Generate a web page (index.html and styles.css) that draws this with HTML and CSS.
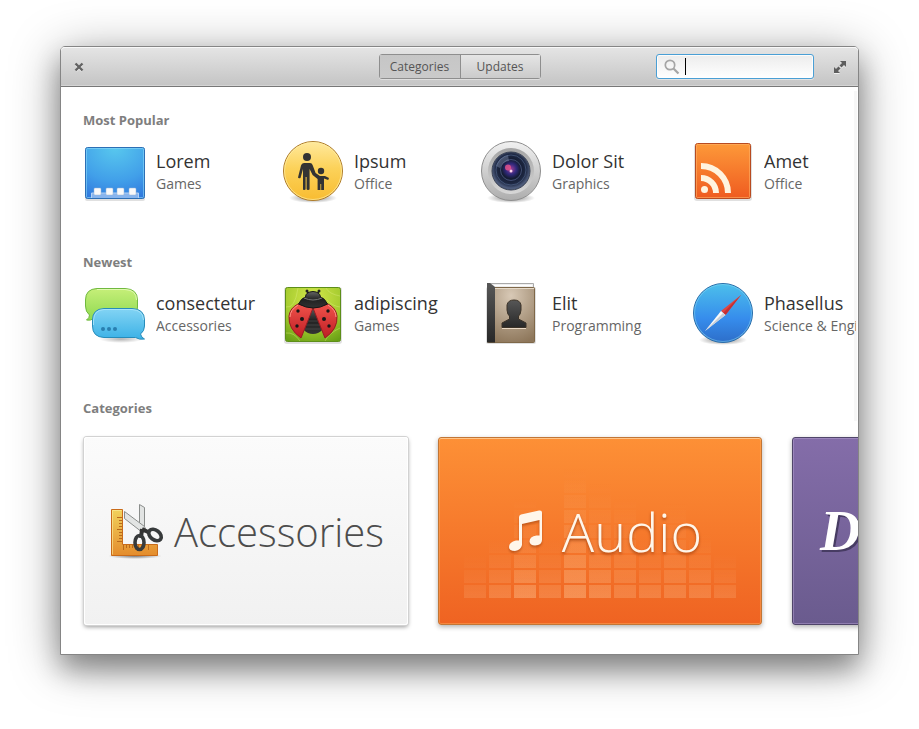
FILE: index.html
```html
<!DOCTYPE html>
<html lang="en">
<head>
<meta charset="utf-8">
<title>Software</title>
<link rel="stylesheet" href="styles.css">
</head>
<body>
<div class="window">
  <header class="bar">
    <button class="icon-btn" aria-label="Close"><svg width="10" height="10" viewBox="0 0 10 10"><path d="M2 3l6 6M8 3l-6 6" stroke="#f2f2f2" stroke-width="2.4"/><path d="M1.5 1.5l7 7M8.500 1.500l-7 7" stroke="#636363" stroke-width="2.400"/></svg></button>
    <nav class="switch"><button class="active">Categories</button><button>Updates</button></nav>
    <div class="bar-end">
      <label class="search">
        <svg width="16" height="16" viewBox="0 0 16 16"><circle cx="6" cy="6" r="4.700" fill="none" stroke="#a5a5a5" stroke-width="1.700"/><path d="M9.500 9.500l5 5" stroke="#a5a5a5" stroke-width="2.200"/></svg>
        <span class="caret"></span>
        <input type="text" aria-label="Search">
      </label>
      <button class="icon-btn" aria-label="Maximize"><svg width="14" height="14" viewBox="0 0 14 14"><path d="M7 2h6v6l-2-2-2.500 2.500-2-2L9 4zM1 8l2 2 2.500-2.500 2 2L5 12l2 2H1z" fill="#f0f0f0"/><path d="M7 1h6v6l-2-2-2.500 2.500-2-2L9 3zM1 7l2 2 2.500-2.500 2 2L5 11l2 2H1z" fill="#5e5e5e"/></svg></button>
    </div>
  </header>
  <main>
    <div class="lists">
      <section>
        <h2>Most Popular</h2>
        <ul class="apps">
          <li><svg class="ico" viewBox="0 0 64 64"><defs><radialGradient id="sky" cx=".5" cy="0" r="1.1"><stop offset="0" stop-color="#58c8ee"/><stop offset=".6" stop-color="#419fe9"/><stop offset="1" stop-color="#2f76dd"/></radialGradient></defs><rect x="2" y="9" width="60" height="53" rx="2" fill="#000" opacity=".12"/><rect x="2.500" y="8.500" width="59" height="51" rx="2" fill="url(#sky)" stroke="#2c6fb5"/><rect x="3.500" y="9.500" width="57" height="49" rx="1" fill="none" stroke="#8ad9fa" opacity=".6"/><path d="M8.500 59v-5h47v5" fill="#88b5ee" stroke="#b4d2f5"/><g fill="#f9f9f9" stroke="#9bb4d6" stroke-width=".5"><rect x="11" y="49" width="7" height="7" rx="1"/><rect x="23" y="49" width="7" height="7" rx="1"/><rect x="34" y="49" width="7" height="7" rx="1"/><rect x="46" y="49" width="7" height="7" rx="1"/></g></svg>
            <div><h3>Lorem</h3><p>Games</p></div></li>
          <li><svg class="ico" viewBox="0 0 64 64"><defs><linearGradient id="gold" x2="0" y2="1"><stop stop-color="#ffe99d"/><stop offset=".45" stop-color="#fcd25a"/><stop offset="1" stop-color="#f8bc31"/></linearGradient><radialGradient id="sh"><stop stop-color="#000" stop-opacity=".5"/><stop offset="1" stop-color="#000" stop-opacity="0"/></radialGradient></defs><ellipse cx="32" cy="59" rx="24" ry="5" fill="url(#sh)"/><circle cx="32" cy="32" r="29.500" fill="url(#gold)" stroke="#ae7c2b"/><circle cx="32" cy="32" r="28.500" fill="none" stroke="#fff0a5" opacity=".7"/><g fill="#333"><circle cx="26" cy="18" r="4"/><circle cx="40" cy="32" r="3.200"/><path d="M23 24h6q2 0 2.600 2l3 8 4.400 3h5l4 2-.8 2-4.200-1.500V51h-2.800v-6h-.8v6h-2.800V40l-5-4-3-6v20q0 1-1.500 1t-1.500-1V38h-1v12q0 1-1.500 1T22 50V30l-2.500 9q-2 .8-2.500-.5l3-12q.6-2.500 3-2.500z"/></g></svg>
            <div><h3>Ipsum</h3><p>Office</p></div></li>
          <li><svg class="ico" viewBox="0 0 64 64"><defs><linearGradient id="silver" x2="0" y2="1"><stop stop-color="#f1f1f1"/><stop offset="1" stop-color="#adadad"/></linearGradient><linearGradient id="silver2" x2="0" y2="1"><stop stop-color="#a4a4a4"/><stop offset="1" stop-color="#d7d7d7"/></linearGradient><radialGradient id="lens" cy=".45"><stop stop-color="#a23f9a"/><stop offset=".28" stop-color="#30297c"/><stop offset=".5" stop-color="#141c33"/><stop offset=".8" stop-color="#202a45"/><stop offset="1" stop-color="#4d5b7b"/></radialGradient></defs><ellipse cx="32" cy="59" rx="24" ry="5" fill="url(#sh)"/><circle cx="32" cy="32" r="29.500" fill="url(#silver)" stroke="#8f8f8f"/><circle cx="32" cy="32" r="23" fill="url(#silver2)"/><circle cx="32" cy="32" r="19" fill="url(#lens)" stroke="#3a4254"/><circle cx="32" cy="31" r="15" fill="none" stroke="#5e759e" opacity=".5"/><circle cx="32" cy="31" r="10.500" fill="none" stroke="#54638b" opacity=".7"/><path d="M17 27q3-9 12-11l1 6q-7 1-9 7z" fill="#aabbd9" opacity=".3"/><circle cx="29" cy="28.500" r="3" fill="#ed558b" opacity=".8"/><circle cx="32" cy="32" r="1.500" fill="#fbd6ec"/></svg>
            <div><h3>Dolor Sit</h3><p>Graphics</p></div></li>
          <li><svg class="ico" viewBox="0 0 64 64"><defs><linearGradient id="rss" x2="0" y2="1"><stop stop-color="#fd9939"/><stop offset="1" stop-color="#ef5b20"/></linearGradient></defs><rect x="3" y="5" width="58" height="57" rx="3" fill="#000" opacity=".12"/><rect x="4.500" y="4.500" width="55" height="55" rx="2" fill="url(#rss)" stroke="#b84b20"/><rect x="5.500" y="5.500" width="53" height="53" rx="1" fill="none" stroke="#ffb166" opacity=".6"/><g fill="none" stroke="#fff4df" stroke-width="6"><path d="M10 27a27 27 0 0 1 27 27M10 39a15 15 0 0 1 15 15"/></g><circle cx="13.500" cy="50.500" r="3.500" fill="#fff4df"/></svg>
            <div><h3>Amet</h3><p>Office</p></div></li>
        </ul>
      </section>
      <section>
        <h2>Newest</h2>
        <ul class="apps">
          <li><svg class="ico" viewBox="0 0 64 64"><defs><linearGradient id="lime" x2="0" y2="1"><stop stop-color="#c6ef79"/><stop offset="1" stop-color="#8ed950"/></linearGradient><linearGradient id="aqua" x2="0" y2="1"><stop stop-color="#83d4f4"/><stop offset="1" stop-color="#3bb1e6"/></linearGradient></defs><ellipse cx="38" cy="58" rx="22" ry="4" fill="url(#sh)" opacity=".6"/><path d="M14 7.500h28Q54.500 8 54.500 19v7Q54.500 37 43 37.500H11Q7 40 3.500 39q3-2 3-5Q2.500 31 2.500 25v-6Q2.500 8 14 7.500z" fill="url(#lime)" stroke="#70b93f"/><path d="M14 8.500h28Q53.500 9 53.500 19" fill="none" stroke="#e1fab1"/><path d="M21 27.500h28Q61.500 28 61.500 39v6q0 5-4 8 1 4 4 5-5 1-9-1.500H21Q9.500 56 9.500 45v-6Q9.500 28 21 27.500z" fill="url(#aqua)" stroke="#278cba"/><path d="M10.500 44v-5Q11 29 21 28.500h28Q60 29 60.500 39" fill="none" stroke="#b0e7fb" opacity=".8"/><g fill="#297fb0"><circle cx="20" cy="48" r="2"/><circle cx="26" cy="48" r="2"/><circle cx="32" cy="48" r="2"/></g></svg>
            <div><h3>consectetur</h3><p>Accessories</p></div></li>
          <li><svg class="ico" viewBox="0 0 64 64"><defs><radialGradient id="leaf" cy=".2" r=".9"><stop stop-color="#d6e94c"/><stop offset=".6" stop-color="#a3ca2e"/><stop offset="1" stop-color="#679f15"/></radialGradient><linearGradient id="wing" x2="0" y2="1"><stop stop-color="#f0534b"/><stop offset="1" stop-color="#bd1d24"/></linearGradient><linearGradient id="blk" x2="0" y2="1"><stop stop-color="#666"/><stop offset=".5" stop-color="#222"/><stop offset="1" stop-color="#333"/></linearGradient></defs><rect x="3" y="6" width="58" height="57" rx="3" fill="#000" opacity=".12"/><rect x="4.500" y="6.500" width="55" height="54" rx="2" fill="url(#leaf)" stroke="#5d8e19"/><path d="M5 26q9 2 12-19M5 52q8-1 14 8M45 7q3 6 14 8M59 26q-8-1-13-7M44 60q4-8 15-13" fill="none" stroke="#dcee7f" opacity=".4"/><path d="M27 13q0-3-2-3M37 13q0-3 2-3" fill="none" stroke="#222" stroke-width="1.500"/><circle cx="26" cy="10" r="1.500" fill="#222"/><circle cx="38" cy="10" r="1.500" fill="#222"/><ellipse cx="32" cy="39" rx="13" ry="14" fill="url(#blk)"/><path d="M22 40h20M22 44h20M24 48h16" stroke="#555" opacity=".6"/><path d="M17 23l15 4-12 30Q7 48 8 35q1-8 9-12zM47 23l-15 4 12 30q13-9 12-22-1-8-9-12z" fill="url(#wing)" stroke="#981c22"/><path d="M17 24Q9 29 9 36M47 24q8 5 8 12" fill="none" stroke="#ff9586"/><path d="M17.500 23q3-6 7-7 0-5 7.500-5.500Q39 11 39.500 16q4 1 7 7-14 8-29 0z" fill="url(#blk)" stroke="#161616"/><path d="M23 17q9 4 18 0" fill="none" stroke="#777"/><g fill="#171717"><circle cx="17" cy="30" r="1.700"/><circle cx="47" cy="30" r="1.700"/><circle cx="21" cy="38" r="2"/><circle cx="43" cy="38" r="2"/><circle cx="16" cy="45" r="1.700"/><circle cx="48" cy="45" r="1.700"/></g></svg>
            <div><h3>adipiscing</h3><p>Games</p></div></li>
          <li><svg class="ico" viewBox="0 0 64 64"><defs><radialGradient id="book" cy=".15" r=".9"><stop stop-color="#d8c9b6"/><stop offset="1" stop-color="#8d765a"/></radialGradient><linearGradient id="ink" x2="0" y2="1"><stop stop-color="#575757"/><stop offset="1" stop-color="#282828"/></linearGradient></defs><rect x="7" y="6" width="50" height="57" rx="2" fill="#000" opacity=".12"/><path d="M8.500 2.500h46v6h-46z" fill="#eee" stroke="#aaa"/><path d="M15 4.500h38" stroke="#fff"/><rect x="8.500" y="6.500" width="47" height="55" rx="1" fill="url(#book)" stroke="#7f6849"/><path d="M16 7.500h39" stroke="#e5d9c8"/><path d="M8 2h3l5 4v55.500H8z" fill="url(#ink)"/><path d="M23 46.500h24V42l-7.500-4v-3q2-1 2.500-6v-5q-1-5-7-5t-7 5v5q.5 5 2.500 6v3L23 42z" fill="url(#ink)" stroke="#3c3328"/><path d="M23 47.500h24" stroke="#ead9c5"/></svg>
            <div><h3>Elit</h3><p>Programming</p></div></li>
          <li><svg class="ico" viewBox="0 0 64 64"><defs><linearGradient id="blue" x2="0" y2="1"><stop stop-color="#4cc0eb"/><stop offset=".6" stop-color="#368cec"/><stop offset="1" stop-color="#2d6ec9"/></linearGradient></defs><ellipse cx="32" cy="59" rx="24" ry="5" fill="url(#sh)"/><circle cx="32" cy="32" r="29.500" fill="url(#blue)" stroke="#296da9"/><circle cx="32" cy="32" r="28.500" fill="none" stroke="#8bdcf6" opacity=".5"/><path d="M50 14L30 30l4.500 4z" fill="#e04541"/><path d="M50 14L32 32l2.500 2z" fill="#c22f35"/><path d="M14 50l16-20 4.500 4z" fill="#fafafa"/><path d="M14 50l18-18 2.500 2z" fill="#c7ced6"/></svg>
            <div><h3>Phasellus</h3><p>Science &amp; Engineering</p></div></li>
        </ul>
      </section>
    </div>
    <section class="cats">
      <h2>Categories</h2>
      <div class="tiles">
        <a href="#" class="tile light"><svg width="56" height="56" viewBox="0 0 56 56"><defs><linearGradient id="wood" x2="0" y2="1"><stop stop-color="#f1d25c"/><stop offset="1" stop-color="#e48c2c"/></linearGradient></defs><ellipse cx="27" cy="53" rx="27" ry="3" fill="url(#sh)"/><path d="M3.500 6.500h11v35h35v11h-46z" fill="url(#wood)" stroke="#c96b19"/><path d="M4.500 51.500v-44h9" fill="none" stroke="#fff0a0" opacity=".6"/><path d="M9 14.500h5M11 17.500h3M11 20.500h3M11 23.500h3M9 26.500h5M11 29.500h3M11 32.500h3M11 35.500h3M9 38.500h5M15.500 42v5M18.500 42v3M21.500 42v3M24.500 42v3M27.500 42v5M30.500 42v3M33.500 42v3M36.500 42v3M40.500 42v5" stroke="#b8691c"/><path d="M31.500 1.500l5 3v20l-3 6-2-5z" fill="#e2e4e3" stroke="#8a8d8b"/><path d="M16.500 8.500l20 15 2 5-4 1-18-14z" fill="#e2e4e3" stroke="#8a8d8b"/><path d="M34 26l8 4M34 26l-1 9" stroke="#333" stroke-width="4"/><ellipse cx="31.500" cy="39.500" rx="4.500" ry="7" fill="none" stroke="#373a3b" stroke-width="3.600"/><ellipse cx="47" cy="32" rx="7" ry="4.800" transform="rotate(38 47 32)" fill="none" stroke="#373a3b" stroke-width="3.600"/></svg><span>Accessories</span></a>
        <a href="#" class="tile orange">
          <svg class="eq" viewBox="0 0 272 130" aria-hidden="true"><defs><linearGradient id="fade" x2="0" y2="1"><stop stop-color="#ffd0a0" stop-opacity="0"/><stop offset=".5" stop-color="#ffd0a0" stop-opacity=".1"/><stop offset="1" stop-color="#ffd0a0" stop-opacity=".25"/></linearGradient><pattern id="cells" width="25" height="15" patternUnits="userSpaceOnUse" y="12"><rect width="22" height="13" fill="#fff"/></pattern><mask id="grid"><rect width="272" height="130" fill="url(#cells)"/></mask></defs><g fill="url(#fade)" mask="url(#grid)"><rect y="85" width="22" height="45" opacity=".7"/><rect x="25" y="70" width="22" height="60"/><rect x="50" y="30" width="22" height="100"/><rect x="50" y="75" width="22" height="55" opacity=".7"/><rect x="75" y="70" width="22" height="60"/><rect x="100" width="22" height="130"/><rect x="100" y="10" width="22" height="120" opacity=".7"/><rect x="125" y="15" width="22" height="115"/><rect x="125" y="85" width="22" height="45" opacity=".4"/><rect x="150" y="30" width="22" height="100"/><rect x="175" y="70" width="22" height="60"/><rect x="200" y="35" width="22" height="95"/><rect x="225" y="65" width="22" height="65"/><rect x="250" y="85" width="22" height="45" opacity=".8"/></g></svg>
          <svg class="note" width="36" height="42" viewBox="0 0 36 42"><path d="M11 7q0-2 2-2.500L31 .5q3-.5 3 2V30q0 5-7 5.500-5 0-5.500-4 0-5 7-6h3V10L14 14v21q-1 5-7 6-6 0-6-4 0-5 7-6.500h3z" fill="#fff6ea"/></svg><span>Audio</span></a>
        <a href="#" class="tile purple"><span>Development</span></a>
      </div>
    </section>
  </main>
</div>
</body>
</html>
```
FILE: styles.css
```css
* { box-sizing: border-box; }
body {
  margin: 0;
  padding: 46px 60px 74px;
  background: #fff;
  font-family: "Open Sans", "Liberation Sans", sans-serif;
  color: #333;
}
h2, h3, p, ul { margin: 0; padding: 0; }
button { font: inherit; color: inherit; padding: 0; border: 0; background: none; }
svg { display: block; flex: none; }

.window {
  border: 1px solid #858585;
  border-radius: 5px 5px 0 0;
  background: #fff;
  box-shadow: 0 15px 26px rgba(0, 0, 0, .3), 0 8px 50px rgba(0, 0, 0, .38);
}
.bar {
  display: grid;
  grid-template-columns: 1fr auto 1fr;
  align-items: center;
  height: 40px;
  padding: 0 11px;
  border-bottom: 1px solid #777;
  border-radius: 4px 4px 0 0;
  background: linear-gradient(#e5e5e5, #c4c4c4);
  box-shadow: inset 0 1px #f8f8f8, inset 0 -1px #d4d4d4;
}
.icon-btn { width: 14px; height: 14px; display: grid; place-items: center; }
.switch {
  display: flex;
  border: 1px solid #8e8e8e;
  border-radius: 3px;
  font-size: 12px;
  color: #555;
  text-shadow: 0 1px #eee;
  box-shadow: 0 1px rgba(255, 255, 255, .4);
}
.switch button {
  width: 80px;
  height: 23px;
  background: linear-gradient(#e5e5e5, #cbcbcb);
}
.switch button + button { border-left: 1px solid #8e8e8e; }
.switch .active { background: linear-gradient(#c6c6c6, #cacaca); }
.bar-end { display: flex; justify-content: flex-end; align-items: center; gap: 19px; }
.search {
  display: flex;
  align-items: center;
  width: 158px;
  height: 25px;
  padding: 0 7px;
  border: 1px solid #4a9fd5;
  border-radius: 3px;
  background: linear-gradient(#ececec, #fff);
  box-shadow: inset 0 0 0 1px rgba(255, 255, 255, .8), 0 1px #e2e2e2;
}
.search input { flex: 1; min-width: 0; border: 0; outline: 0; background: none; font: inherit; font-size: 12px; }
.caret { width: 1px; height: 17px; margin-left: 5px; background: #000; }

main { overflow: hidden; padding: 24px 0 29px 22px; }
h2 { font-size: 13px; line-height: 18px; font-weight: 700; color: #7e7e7e; }
.lists { position: relative; padding-right: 2px; }
.lists::after {
  content: "";
  position: absolute;
  top: -20px;
  right: 1px;
  bottom: -26px;
  width: 3px;
  z-index: -1;
  background: #f7f7f7;
}
.lists, .window { z-index: 0; }
.lists section { height: 142px; }
.apps {
  display: grid;
  grid-template-columns: 198px 198px 212px minmax(0, 1fr);
  margin-top: 10px;
  list-style: none;
}
.apps li { display: flex; gap: 9px; min-width: 0; }
.apps div { flex: 1; min-width: 0; overflow: hidden; white-space: nowrap; padding-top: 10px; }
.ico { width: 64px; height: 64px; }
h3 { font-size: 18px; line-height: 24px; font-weight: 400; color: #333; }
p { font-size: 14px; line-height: 22px; color: #666; }

.cats { padding-top: 4px; }
.tiles { display: flex; gap: 30px; margin: 20px 0 0 1px; }
.tile {
  position: relative;
  flex: none;
  display: flex;
  align-items: center;
  justify-content: center;
  width: 324px;
  height: 188px;
  border-radius: 3px;
  text-decoration: none;
  font-weight: 300;
}
.light {
  gap: 10px;
  color: #4d4d4d;
  font-size: 40px;
  background: linear-gradient(#fbfbfb, #f1f1f1);
  box-shadow: inset 0 0 0 1px #fff, 0 0 0 1px #d2d2d2, 0 2px 4px rgba(0, 0, 0, .4);
}
.orange {
  gap: 18px;
  padding-left: 10px;
  color: #fff6ea;
  font-size: 54px;
  text-shadow: 0 2px 3px rgba(120, 40, 0, .55);
  border: 1px solid #c27636;
  background: linear-gradient(#fd9036, #ef6322);
  box-shadow: inset 0 1px #ffc488, inset 0 0 0 1px rgba(255, 170, 90, .5), 0 2px 5px rgba(0, 0, 0, .3);
}
.eq { position: absolute; left: 25px; right: 25px; bottom: 26px; }
.note { filter: drop-shadow(0 2px 1px rgba(120, 40, 0, .4)); }
.orange span { position: relative; }
.purple {
  justify-content: flex-start;
  padding-left: 27px;
  overflow: hidden;
  color: #fff;
  font: italic 700 56px "Liberation Serif", serif;
  text-shadow: 2px 2px #473c63;
  border: 1px solid #50456a;
  background: linear-gradient(#846da9, #6a5b8e);
  box-shadow: inset 0 0 0 1px rgba(180, 160, 210, .5), 0 2px 5px rgba(0, 0, 0, .3);
}
```
